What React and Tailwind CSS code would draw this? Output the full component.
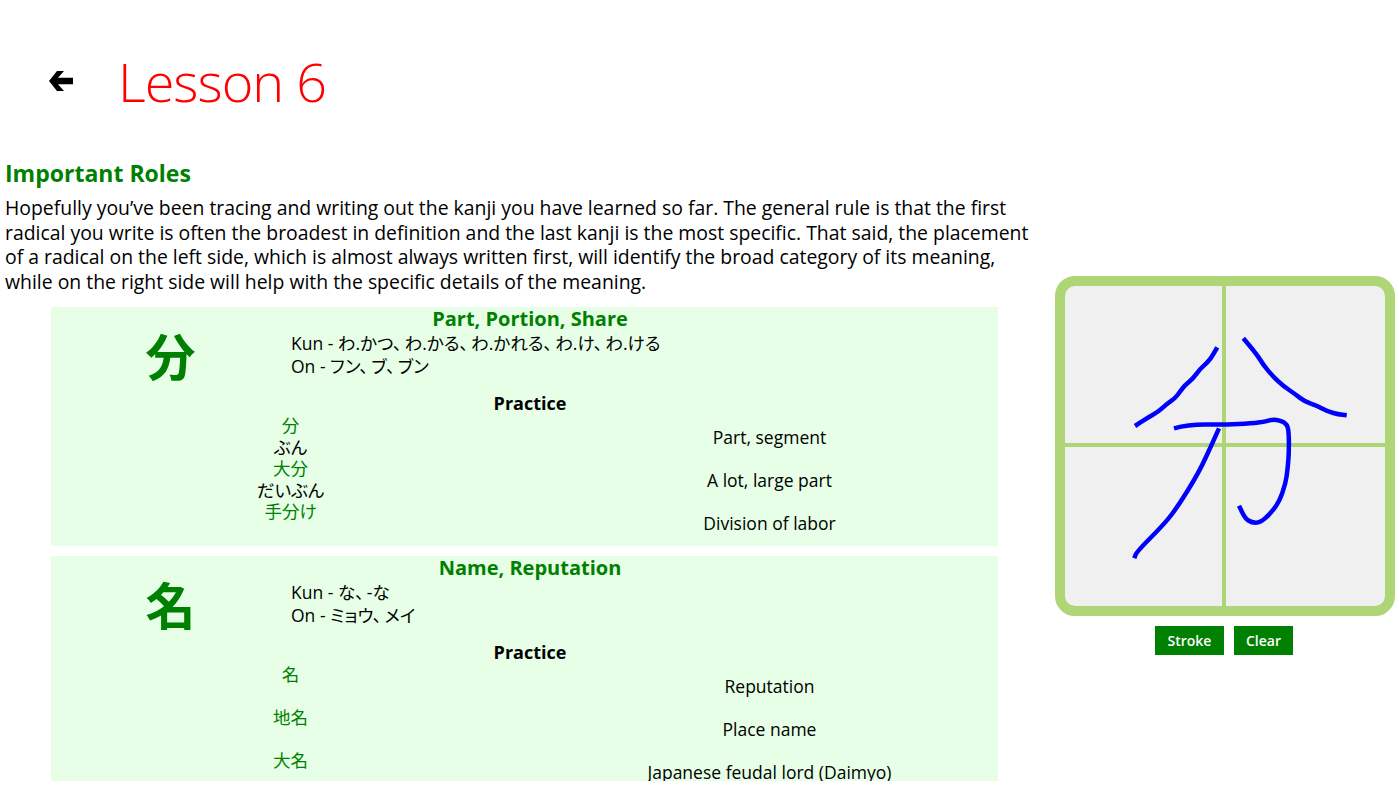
const FONT = "font-['Open_Sans','Noto_Sans_CJK_JP',sans-serif]";

const lessons = [
  {
    kanji: "分",
    title: "Part, Portion, Share",
    kun: "Kun - わ.かつ、わ.かる、わ.かれる、わ.け、わ.ける",
    on: "On - フン、ブ、ブン",
    practice: [
      { word: "分", reading: "ぶん", meaning: "Part, segment" },
      { word: "大分", reading: "だいぶん", meaning: "A lot, large part" },
      { word: "手分け", reading: "", meaning: "Division of labor" },
    ],
  },
  {
    kanji: "名",
    title: "Name, Reputation",
    kun: "Kun - な、-な",
    on: "On - ミョウ、メイ",
    practice: [
      { word: "名", reading: "", meaning: "Reputation" },
      { word: "地名", reading: "", meaning: "Place name" },
      { word: "大名", reading: "", meaning: "Japanese feudal lord (Daimyo)" },
    ],
  },
];

const strokes = [
  [[152.3,61.3],[147.3,70],[142.7,76.3],[135,83],[128.3,92.3],[120,99],[115,105.7],[110,112.3],[101.7,118],[93.3,125.7],[81.7,132.3],[70,140]],
  [[178.3,52.3],[191.7,68],[198.3,79],[208.3,90.7],[218.3,100],[230,108],[240,115.7],[251.7,119.7],[263.3,125.7],[273.3,128.3],[281.7,129.3]],
  [[109,142.3],[123.3,138.3],[160,138.7],[186.7,137.3],[200,135.7],[209,133],[220,136.3],[223.7,142.3],[224,165.7],[222.7,182.3],[220.7,197.3],[214,216.3],[205,228],[195,236.7],[186.7,236.7],[180,232.3],[174,219.7]],
  [[154,142.3],[147.3,157.3],[134,186.3],[113.3,219.7],[100,237.3],[71.7,265.7],[69.3,272.3]],
];

// smooth the sampled pen points through their midpoints
const toPath = (pts) => {
  let d = `M${pts[0][0]} ${pts[0][1]}`;
  for (let i = 1; i < pts.length - 1; i++) {
    const mx = (pts[i][0] + pts[i + 1][0]) / 2;
    const my = (pts[i][1] + pts[i + 1][1]) / 2;
    d += ` Q${pts[i][0]} ${pts[i][1]} ${mx} ${my}`;
  }
  const last = pts[pts.length - 1];
  return `${d} L${last[0]} ${last[1]}`;
};

// palt squeezes the ideographic comma, give it some room back
const Reading = ({ text }) => (
  <p>
    {text.split("、").map((part, i) => (
      <span key={i}>
        {i > 0 && <span className="pr-[3px]">、</span>}
        {part}
      </span>
    ))}
  </p>
);

const KanjiCard = ({ lesson }) => (
  <div className="w-[947px] h-[239px] shrink-0 bg-[#e6ffe6] overflow-hidden">
    <div className="w-[958px]">
      <h3 className="h-[24px] text-center text-[20px] leading-[24px] font-bold text-[#008000] whitespace-nowrap">
        {lesson.title}
      </h3>
      <div className="grid grid-cols-[240px_1fr] h-[47px]">
        <div className="text-center text-[50px] leading-[52px] font-bold text-[#008000] h-[47px] w-[239px]">
          {lesson.kanji}
        </div>
        <div className="pt-[1px] text-[17.5px] leading-[23px] text-black [font-feature-settings:'palt']">
          <Reading text={lesson.kun} />
          <Reading text={lesson.on} />
        </div>
      </div>
      <h4 className="mt-[13px] h-[24px] text-center text-[18px] leading-[24px] font-bold text-black">
        Practice
      </h4>
      <div className="grid grid-cols-2">
        {lesson.practice.map((row) => (
          <div key={row.word} className="col-span-2 grid grid-cols-2 h-[43px]">
            <div className="text-center text-[17.5px] leading-[21.5px] [font-feature-settings:'palt']">
              <p className="text-[#008000]">{row.word}</p>
              {row.reading && <p className="text-black">{row.reading}</p>}
            </div>
            <div className="flex items-center justify-center text-[17.5px] leading-[24px] text-black whitespace-nowrap">
              {row.meaning}
            </div>
          </div>
        ))}
      </div>
    </div>
  </div>
);

const App = () => {
  return (
    <div className={`${FONT} w-[1399px] h-[787px] bg-white overflow-hidden flex`}>
      <div className="w-[1055px] shrink-0">
        <header className="h-[161px] flex items-center pl-[49px]">
          <svg width="24" height="20" viewBox="0 0 24 20" fill="black">
            <path d="M0 10 L8 0 H15 L9 6.8 H24 V13.2 H9 L15 20 H8 Z" />
          </svg>
          <h1 className="ml-[45px] text-[54px] leading-none tracking-[-1px] font-light text-[#ff0000] whitespace-nowrap">
            Lesson 6
          </h1>
        </header>
        <section className="pl-[5px] w-[1030px]">
          <h2 className="h-[24px] text-[23px] leading-[24px] font-bold text-[#008000]">Important Roles</h2>
          <p className="mt-[11px] h-[111px] text-[19.4px] leading-[24.5px] text-black">
            Hopefully you’ve been tracing and writing out the kanji you have learned so far. The general rule is that the first radical you write is often the broadest in definition and the last kanji is the most specific. That said, the placement of a radical on the left side, which is almost always written first, will identify the broad category of its meaning, while on the right side will help with the specific details of the meaning.
          </p>
        </section>
        <div className="ml-[51px] h-[474px] overflow-hidden flex flex-col gap-[10px]">
          {lessons.map((lesson) => (
            <KanjiCard key={lesson.kanji} lesson={lesson} />
          ))}
        </div>
      </div>
      <div className="w-[340px] pt-[276px] flex flex-col items-center">
        <div className="w-[340px] h-[340px] rounded-[20px] border-[10px] border-[#aed576] bg-[#f0f0f0] overflow-hidden">
          <svg width="320" height="320" viewBox="0 0 320 320" fill="none">
            <path d="M159 0 V320 M0 159 H320" stroke="#aed576" strokeWidth="4" />
            {strokes.map((pts, i) => (
              <path key={i} d={toPath(pts)} stroke="#0000ff" strokeWidth="4.5" strokeLinejoin="round" />
            ))}
          </svg>
        </div>
        <div className="mt-[10px] mr-[2px] flex gap-[10px]">
          <button className="w-[69px] h-[29px] bg-[#008000] text-white text-[14px] font-semibold">Stroke</button>
          <button className="w-[59px] h-[29px] bg-[#008000] text-white text-[14px] font-semibold">Clear</button>
        </div>
      </div>
    </div>
  );
};

export default App;
